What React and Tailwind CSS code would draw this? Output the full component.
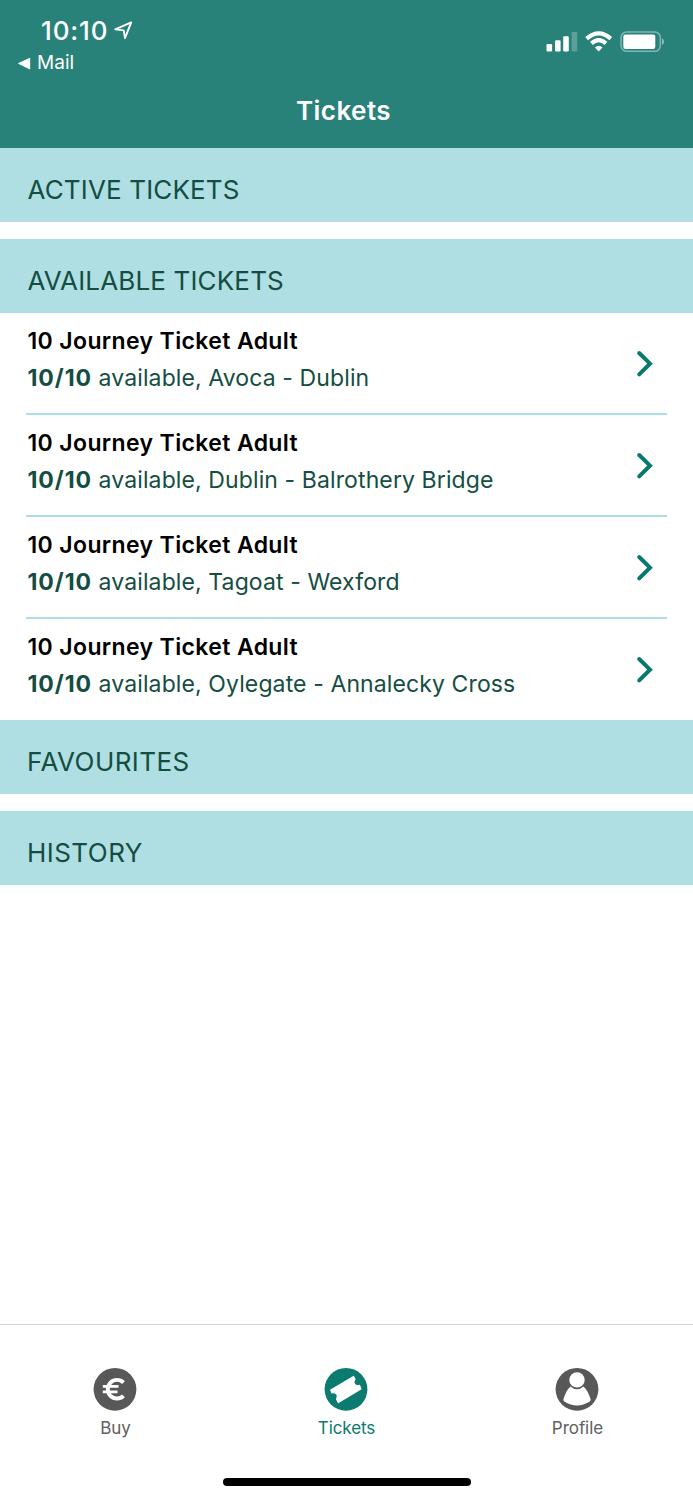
import React from "react";

const tickets = [
  "Avoca - Dublin",
  "Dublin - Balrothery Bridge",
  "Tagoat - Wexford",
  "Oylegate - Annalecky Cross",
];

function StatusBar() {
  return (
    <div className="flex h-[74px] justify-between text-white">
      <div className="pt-[15px]">
        <div className="flex h-[31px] items-center pl-[41px]">
          <span className="text-[26px] font-medium leading-[31px] tracking-[0.85px]">10:10</span>
          <svg className="-mt-px ml-[6px] h-[19px] w-[19px]" viewBox="0 0 18 18" fill="none" stroke="white" strokeWidth="1.8" strokeLinejoin="round">
            <path d="M16.3 1.3 10.4 16.2 9.2 8.9 1.2 7.9Z" />
          </svg>
        </div>
        <div className="flex h-[34px] items-center pl-[18px]">
          <svg className="h-[13px] w-[13px]" viewBox="0 0 13 13" fill="white">
            <path d="M.5 6.1Q0 6.6.7 7.1L11.5 12.3Q12.2 12.5 12.2 11.7V1.5Q12.2.6 11.4.9Z" />
          </svg>
          <span className="ml-[6px] text-[19px] leading-[34px] tracking-[0.05px]">Mail</span>
        </div>
      </div>
      <div className="flex items-start pr-[28px] pt-[31px]">
        <svg className="h-[22px] w-[32px]" viewBox="0 0 32 22" fill="white">
          <rect x="0.5" y="13" width="5.6" height="7.5" rx="1.2" />
          <rect x="9" y="9.3" width="5.6" height="11.2" rx="1.2" />
          <rect x="17.2" y="5.2" width="5.6" height="15.3" rx="1.2" />
          <rect x="25.6" y="1" width="5.6" height="19.5" rx="1.2" opacity=".24" />
        </svg>
        <svg className="ml-[7px] h-[22px] w-[28px]" viewBox="0 0 28 22" fill="none" stroke="white">
          <path d="M1.6 7.7Q13.7-2.9 25.8 7.7" strokeWidth="4.2" />
          <path d="M6.4 12.4Q13.7 5.9 21 12.4" strokeWidth="4.2" />
          <path d="M9.9 16.4Q13.7 13.1 17.5 16.4L13.7 20.5Z" fill="white" stroke="none" />
        </svg>
        <svg className="ml-[7px] h-[22px] w-[45px]" viewBox="0 0 45 22">
          <rect x="1.1" y="1" width="39.2" height="19.3" rx="5.6" fill="none" stroke="white" strokeWidth="1.5" opacity=".42" />
          <rect x="3.3" y="3.4" width="32" height="14.6" rx="2.2" fill="white" />
          <path d="M42 7.3Q44 8.5 44 10.7T42 14.1Z" fill="white" opacity=".5" />
        </svg>
      </div>
    </div>
  );
}

function Section({ tight, children }) {
  return (
    <h2
      className={
        tight
          ? "flex h-[74px] items-center bg-[#afdee3] pl-[27.5px] pt-[10px] text-[26px] leading-8 tracking-[0.15px] text-[#144d41]"
          : "flex h-[74px] items-center bg-[#afdee3] pl-[27px] pt-[10px] text-[26px] leading-8 tracking-[0.45px] text-[#144d41]"
      }
    >
      {children}
    </h2>
  );
}

function Ticket({ route, last }) {
  return (
    <li className="flex h-[102px] justify-between pl-[26px] pr-[26px]">
      <div className={last ? "flex w-full justify-between pt-[10px]" : "flex w-full justify-between border-b-2 border-[#aadfe3] pt-[10px]"}>
        <div className="pl-[1.5px] text-[23px] leading-[37px]">
          <p className="font-semibold tracking-[0.37px] text-black">10 Journey Ticket Adult</p>
          <p className="tracking-[0.11px] text-[#144d41]">
            <b className="font-bold tracking-[0.95px]">10/10</b> available, {route}
          </p>
        </div>
        <svg className="mr-[12px] mt-[27px] h-[28px] w-[19px]" viewBox="0 0 19 28" fill="none" stroke="#087a6d" strokeWidth="4" strokeLinecap="round" strokeLinejoin="miter">
          <path d="M3.2 3 14 13.7 3.2 24.4" />
        </svg>
      </div>
    </li>
  );
}

function Tab({ label, active, children }) {
  return (
    <button className="flex flex-1 flex-col items-center pt-[42px]">
      <svg className="mr-px h-11 w-11" viewBox="0 0 44 44">
        <circle cx="22" cy="22.3" r="21.4" fill={active ? "#0a7b6e" : "#585858"} />
        {children}
      </svg>
      <span className={active ? "mt-[5px] text-[17px] leading-6 tracking-[-0.1px] text-[#0a7b6e]" : "mt-[5px] text-[17px] leading-6 tracking-[-0.05px] text-[#606060]"}>
        {label}
      </span>
    </button>
  );
}

export default function App() {
  return (
    <div className="flex h-[1500px] w-full flex-col bg-white font-['Inter',sans-serif]">
      <header className="h-[148px] bg-[#29827a]">
        <StatusBar />
        <h1 className="pr-[6px] pt-[19px] text-center text-[26px] font-semibold leading-9 tracking-[0.45px] text-white">Tickets</h1>
      </header>
      <main className="flex-1">
        <div className="flex flex-col gap-[17px]">
          <Section tight>ACTIVE TICKETS</Section>
          <Section tight>AVAILABLE TICKETS</Section>
        </div>
        <ul className="h-[407px]">
          {tickets.map((route, i) => (
            <Ticket key={route} route={route} last={i === tickets.length - 1} />
          ))}
        </ul>
        <div className="flex flex-col gap-[17px]">
          <Section>FAVOURITES</Section>
          <Section>HISTORY</Section>
        </div>
      </main>
      <footer className="flex h-[176px] flex-col border-t border-[#d4d4d4]">
        <nav className="flex h-[152px]">
          <Tab label="Buy">
            <g fill="none" stroke="white" strokeWidth="3.9">
              <path d="M30.5 15.6A9.2 9.3 0 1 0 30.5 28.8" />
              <path d="M9.8 19.4H25.5M9.8 24.8H24.5" strokeWidth="2.7" />
            </g>
          </Tab>
          <Tab label="Tickets" active>
            <path fill="white" stroke="white" strokeWidth="1.2" strokeLinejoin="round" d="M29.6 9.4 31 12.2Q29 15.4 30.7 17.4Q32.6 19.4 35.6 18.4L36.9 22 14.4 35.6 12.6 32.3Q14.4 29.4 12.6 27Q10.4 25 7.9 25.9L6.7 22.9Z" />
          </Tab>
          <Tab label="Profile">
            <circle cx="22" cy="12.9" r="7.7" fill="white" />
            <path fill="white" d="M15.6 19.5Q11.5 22.4 8.4 32.3Q8.1 33.8 9.5 34.7Q15.5 38.4 22 38.4T34.5 34.7Q35.9 33.8 35.6 32.3Q32.5 22.4 28.4 19.5Q25.5 22.3 22 22.3T15.6 19.5Z" />
          </Tab>
        </nav>
        <div className="mx-auto mt-px h-2 w-[248px] rounded-full bg-black" />
      </footer>
    </div>
  );
}
